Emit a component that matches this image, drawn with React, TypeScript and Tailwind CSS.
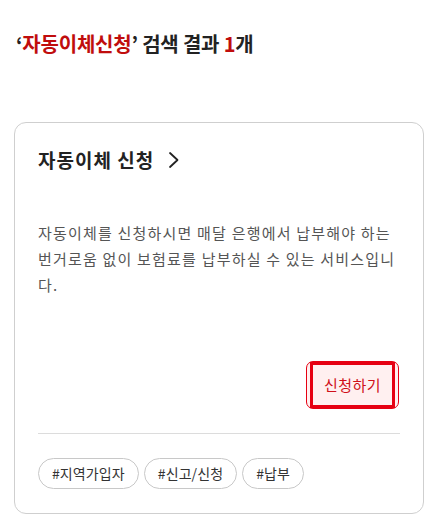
import React from "react";

const font = { fontFamily: '"Noto Sans CJK KR", "Noto Sans", sans-serif' };

export default function App() {
  return (
    <div className="w-[432px] h-[526px] bg-white" style={font}>
      <div className="pt-[30px] pl-[16px] pr-[8px]">
        <h1 className="text-[20px] leading-[28px] font-bold text-[#222] tracking-[-0.2px]">
          ‘<span className="text-[#c00d0d]">자동이체신청</span>’ 검색 결과{" "}
          <span className="text-[#c00d0d]">1</span>개
        </h1>
      </div>
      <div className="mt-[64px] ml-[14px] w-[410px] rounded-[12px] border border-[#cfcfcf] px-[23px] pt-[24px] pb-[24px]">
        <div className="flex items-center h-[26px]">
          <span className="text-[19px] leading-[26px] font-bold text-[#222] tracking-[1px]">자동이체 신청</span>
          <svg className="ml-[14px]" width="12" height="18" viewBox="0 0 12 18" fill="none">
            <path d="M2 2 L9.5 9 L2 16" stroke="#222" strokeWidth="1.8" strokeLinecap="round" strokeLinejoin="round" />
          </svg>
        </div>
        <p className="mt-[47px] text-[15px] leading-[26px] text-[#555] tracking-[1.2px]">
          자동이체를 신청하시면 매달 은행에서 납부해야 하는 번거로움 없이 보험료를 납부하실 수 있는 서비스입니다.
        </p>
        <div className="mt-[63px] flex justify-end pr-[1px]">
          <div className="w-[93px] h-[48px] rounded-[7px] border border-[#e60012] bg-[#fff0f0] flex items-stretch px-[3px]">
            <div className="flex-1 border-[3px] border-[#e60012] flex items-center justify-center text-[15px] text-[#d0101a] tracking-[0.5px]">
              신청하기
            </div>
          </div>
        </div>
        <div className="mt-[24px] h-px bg-[#dcdcdc]" />
        <div className="mt-[24px] flex gap-[5px]">
          {["#지역가입자", "#신고/신청", "#납부"].map((t) => (
            <span
              key={t}
              className="h-[31px] px-[13px] rounded-full border border-[#c8c8c8] flex items-center text-[14px] text-[#333] tracking-[0.1px]"
            >
              {t}
            </span>
          ))}
        </div>
      </div>
    </div>
  );
}
